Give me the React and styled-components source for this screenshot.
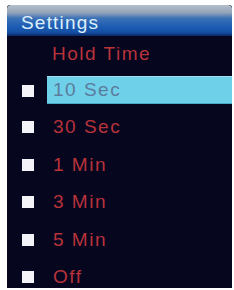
import React from "react";
import styled, { createGlobalStyle } from "styled-components";

const Global = createGlobalStyle`
  html, body { margin: 0; padding: 0; background: #ffffff; }
  body { font-family: "Liberation Sans", Arial, sans-serif; }
`;

const Panel = styled.div`
  margin: 5px 0 0 7px;
  width: 225px;
  height: 283px;
  background: #06061f;
  overflow: hidden;
  display: flex;
  flex-direction: column;
  border-radius: 3px 3px 0 0;
`;

const Header = styled.div`
  height: 31px;
  flex: none;
  display: flex;
  align-items: center;
  padding: 5px 0 0 14px;
  box-sizing: border-box;
  background: linear-gradient(
    to bottom,
    #b4bfcc 0%,
    #93a3b8 25%,
    #3e72b6 42%,
    #1c5cb4 70%,
    #1450a4 88%,
    #0b2664 100%
  );
  border-radius: 4px 4px 0 0;
  color: #dcf0fb;
  font-size: 19px;
  letter-spacing: 1.2px;
`;

const Subtitle = styled.div`
  height: 35px;
  flex: none;
  display: flex;
  align-items: center;
  padding-left: 45px;
  color: #b8333a;
  font-size: 19px;
  letter-spacing: 1.5px;
`;

const Row = styled.div`
  height: 37.5px;
  flex: none;
  display: flex;
  align-items: center;
  padding-left: 15px;
`;

const Box = styled.span`
  width: 12px;
  height: 12px;
  flex: none;
  background: #f4f4f8;
  margin-right: 13px;
  margin-top: ${(p) => (p.$active ? "3px" : "0")};
`;

const Label = styled.div`
  flex: 1;
  height: 26px;
  display: flex;
  align-items: center;
  padding-left: 6px;
  font-size: 19px;
  letter-spacing: 1.5px;
  color: ${(p) => (p.$active ? "#5b7c9c" : "#b8333a")};
  background: ${(p) => (p.$active ? "#6fd0ea" : "transparent")};
  border-top: 1px solid ${(p) => (p.$active ? "#9fe0f0" : "transparent")};
  border-bottom: 1px solid ${(p) => (p.$active ? "#4aa8c8" : "transparent")};
`;

const options = ["10 Sec", "30 Sec", "1 Min", "3 Min", "5 Min", "Off"];

export default function App() {
  return (
    <>
      <Global />
      <Panel>
        <Header>Settings</Header>
        <Subtitle>Hold Time</Subtitle>
        {options.map((o, i) => (
          <Row key={o}>
            <Box $active={i === 0} />
            <Label $active={i === 0}>{o}</Label>
          </Row>
        ))}
      </Panel>
    </>
  );
}
